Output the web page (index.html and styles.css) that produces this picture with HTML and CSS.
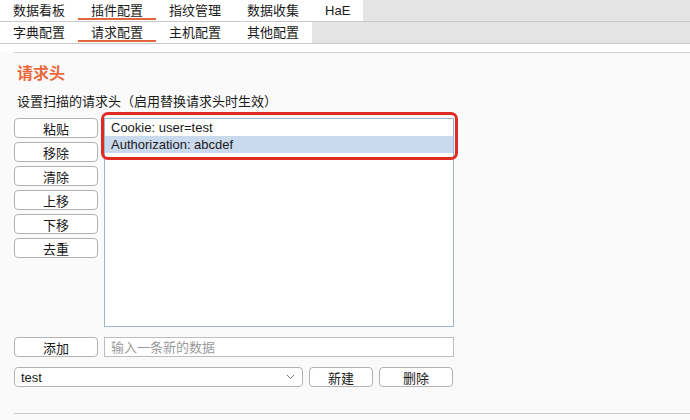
FILE: index.html
```html
<!DOCTYPE html>
<html lang="zh-CN">
<head>
  <meta charset="UTF-8">
  <title>插件配置 | 请求配置</title>
  <link rel="stylesheet" href="styles.css">
</head>
<body>

  <!-- MAIN TABS -->
  <div class="tab-bar">
    <div class="tab-group">
      <div class="tab">数据看板</div>
      <div class="tab active">插件配置</div>
      <div class="tab">指纹管理</div>
      <div class="tab">数据收集</div>
      <div class="tab">HaE</div>
    </div>
  </div>

  <!-- SUB TABS -->
  <div class="tab-bar">
    <div class="tab-group">
      <div class="tab">字典配置</div>
      <div class="tab active">请求配置</div>
      <div class="tab">主机配置</div>
      <div class="tab">其他配置</div>
    </div>
  </div>

  <div class="spacer"></div>

  <!-- CONTENT -->
  <div class="content">
    <div class="top-line"></div>

    <h2 class="section-title">请求头</h2>
    <p class="section-desc">设置扫描的请求头（启用替换请求头时生效）</p>

    <div class="editor">
      <div class="btn-column">
        <button class="btn">粘贴</button>
        <button class="btn">移除</button>
        <button class="btn">清除</button>
        <button class="btn">上移</button>
        <button class="btn">下移</button>
        <button class="btn">去重</button>
      </div>

      <div class="list-wrap">
        <ul class="list">
          <li>Cookie: user=test</li>
          <li class="selected">Authorization: abcdef</li>
        </ul>
        <div class="highlight-box"></div>
      </div>
    </div>

    <div class="form-row">
      <button class="btn">添加</button>
      <input class="text-input" type="text" placeholder="输入一条新的数据">
    </div>

    <div class="form-row">
      <div class="select">
        <span>test</span>
        <svg width="9" height="6" viewBox="0 0 9 6"><path d="M1 1 L4.5 4.5 L8 1" fill="none" stroke="#777" stroke-width="1"/></svg>
      </div>
      <button class="btn btn-small">新建</button>
      <button class="btn btn-medium">删除</button>
    </div>

    <div class="bottom-line"></div>
  </div>

</body>
</html>
```

FILE: styles.css
```css
body {
  margin: 0;
  font-family: 'Liberation Sans', 'Noto Sans CJK SC', sans-serif;
  font-size: 13px;
  background-color: #fafafa;
  color: #1a1a1a;
}

.tab-bar {
  display: flex;
  height: 21px;
  background-color: #e4e4e4;
  border-bottom: 1px solid #c9c9c9;
}

.tab-group {
  display: flex;
  background-color: white;
}

.tab {
  position: relative;
  padding: 0 13px;
  line-height: 21px;
  white-space: nowrap;
}

.tab.active::after {
  content: "";
  position: absolute;
  left: 0;
  right: 0;
  bottom: 1px;
  height: 2px;
  background-color: #e2673c;
}

.spacer {
  height: 8px;
  background-color: white;
}

.content {
  padding: 0 0 0 14px;
}

.top-line {
  border-top: 1px solid #cfcfcf;
}

.section-title {
  margin: 11px 0 0 3px;
  font-size: 16px;
  line-height: 20px;
  font-weight: bold;
  color: #e8683b;
}

.section-desc {
  margin: 9px 0 0 3px;
  line-height: 18px;
}

.editor {
  display: flex;
  gap: 6px;
  margin-top: 7px;
}

.btn-column {
  display: flex;
  flex-direction: column;
  gap: 4px;
}

.btn {
  width: 84px;
  height: 20px;
  padding: 0;
  background-color: white;
  border: 1px solid #b3b3b3;
  border-radius: 4px;
  font-family: inherit;
  font-size: 13px;
  color: #1a1a1a;
}

.btn-small {
  width: 64px;
}

.btn-medium {
  width: 74px;
}

.list-wrap {
  position: relative;
}

.list {
  list-style: none;
  margin: 0;
  padding: 0;
  width: 348px;
  height: 207px;
  background-color: white;
  border: 1px solid #9db6cf;
}

.list li {
  height: 17px;
  line-height: 17px;
  padding-left: 6px;
}

.list li.selected {
  background-color: #c9d9ee;
}

.highlight-box {
  position: absolute;
  left: -3px;
  top: -6px;
  width: 351px;
  height: 42px;
  border: 3px solid #df2c22;
  border-radius: 7px;
}

.form-row {
  display: flex;
  gap: 6px;
  margin-top: 10px;
}

.text-input {
  box-sizing: border-box;
  width: 350px;
  height: 20px;
  margin: 0;
  padding: 0 6px;
  border: 1px solid #bdbdbd;
  background-color: white;
  font-family: inherit;
  font-size: 13px;
}

.text-input::placeholder {
  color: #9a9a9a;
}

.select {
  box-sizing: border-box;
  width: 289px;
  height: 20px;
  display: flex;
  align-items: center;
  justify-content: space-between;
  padding: 0 7px 0 6px;
  background-color: white;
  border: 1px solid #b3b3b3;
  border-radius: 4px;
}

.bottom-line {
  margin-top: 26px;
  border-top: 1px solid #c9c9c9;
}
```
